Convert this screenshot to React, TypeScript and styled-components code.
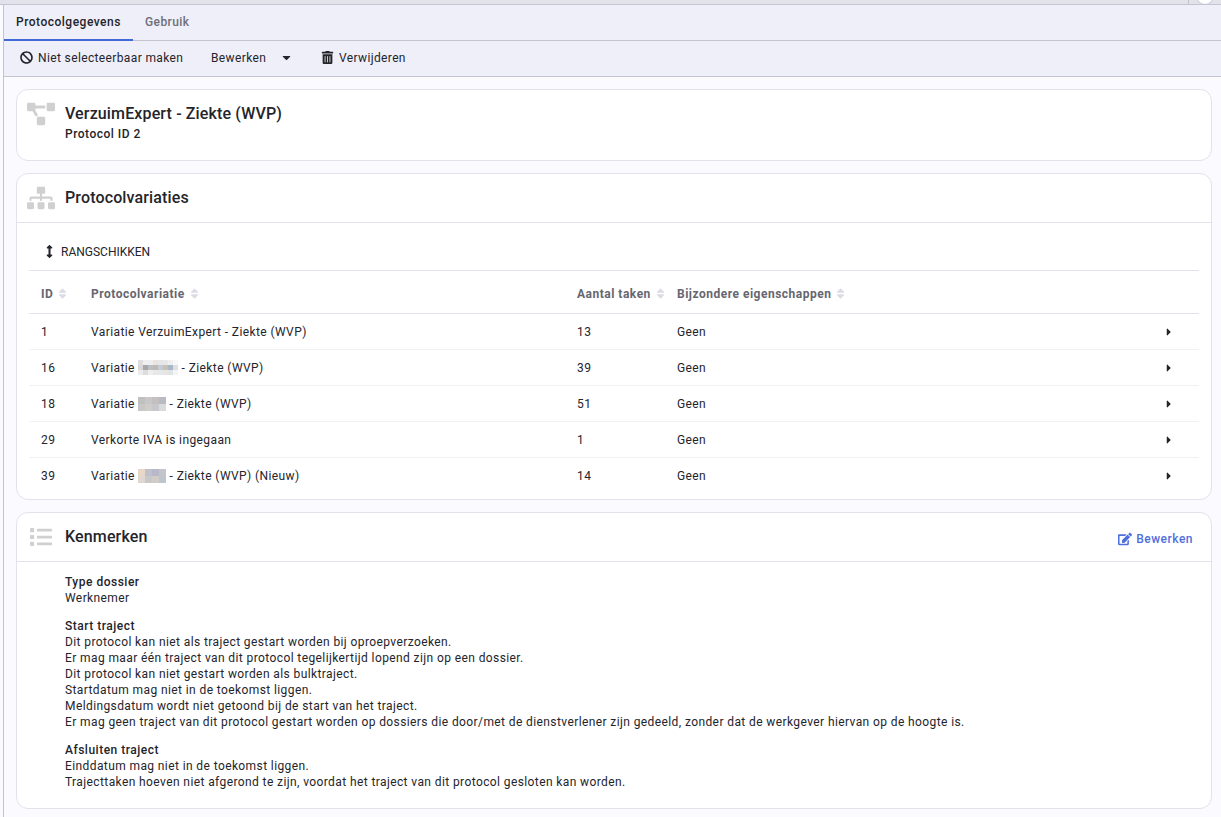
import React from 'react';
import styled, { createGlobalStyle } from 'styled-components';
import {
  FaArrowsAltV,
  FaBan,
  FaCaretDown,
  FaCaretRight,
  FaEdit,
  FaList,
  FaProjectDiagram,
  FaSitemap,
  FaSort,
  FaTrashAlt,
} from 'react-icons/fa';

const GlobalStyle = createGlobalStyle`
  html, body {
    margin: 0;
    padding: 0;
    height: 100%;
    overflow: hidden;
    background: #fbfaff;
    color: #24242b;
    font-family: Roboto, "Liberation Sans", sans-serif;
    font-size: 12px;
    letter-spacing: 0.4px;
  }
`;

const TopStrip = styled.div`
  height: 4px;
  background: #e2e2ea;
  border-bottom: 1px solid #c4c4d0;
  display: flex;
  justify-content: flex-end;
  overflow: hidden;
`;

const StripHandle = styled.div`
  width: 32px;
  border-left: 1px solid #c4c4d0;
  display: flex;
  justify-content: center;
`;

const StripKnob = styled.div`
  width: 16px;
  height: 16px;
  margin-top: -13px;
  border-radius: 50%;
  background: #fff;
  border: 1px solid #c4c4d0;
`;

const Shell = styled.div`
  height: 812px;
  margin-left: 3px;
  border-left: 1px solid #c4c4d0;
`;

const Tabs = styled.nav`
  height: 35px;
  display: flex;
  background: #efeff9;
  border-bottom: 1px solid #c4c4d0;
`;

const Tab = styled.div<{ $active?: boolean }>`
  width: ${p => (p.$active ? '129px' : 'auto')};
  padding-left: 12px;
  box-sizing: border-box;
  height: 36px;
  display: flex;
  align-items: center;
  font-weight: 500;
  letter-spacing: ${p => (p.$active ? '0.5px' : '0.4px')};
  color: ${p => (p.$active ? '#24242b' : '#6e6e78')};
  border-bottom: 2px solid ${p => (p.$active ? '#4169d8' : 'transparent')};
`;

const Toolbar = styled.div`
  height: 33px;
  display: flex;
  align-items: center;
  padding: 0 0 2px 16px;
  background: #efeff9;
  border-bottom: 1px solid #c4c4d0;
  letter-spacing: 0.37px;
`;

const ToolButton = styled.div<{ $width: number }>`
  width: ${p => p.$width}px;
  display: flex;
  align-items: center;
  gap: 5px;
  svg {
    font-size: 13px;
    color: #24242b;
  }
`;

const Caret = styled(FaCaretDown)`
  margin-left: 9px;
  font-size: 12px;
`;

const Content = styled.main`
  padding: 12px 9px 0 12px;
  display: flex;
  flex-direction: column;
  gap: 12px;
`;

const Card = styled.section<{ $height: number }>`
  height: ${p => p.$height}px;
  box-sizing: border-box;
  background: #fff;
  border: 1px solid #e2e2ec;
  border-radius: 12px;
  overflow: hidden;
`;

const IdentityRow = styled.div`
  display: flex;
  padding: 14px 0 0 10px;
`;

const IconSlot = styled.div`
  width: 38px;
  flex: none;
  color: #d0d0d0;
  font-size: 28px;
  line-height: 0;
`;

const DiagramSlot = styled(IconSlot)`
  margin-top: -4px;
`;

const ListSlot = styled(IconSlot)`
  padding-left: 3px;
  box-sizing: border-box;
  font-size: 22px;
`;

const CardTitle = styled.h2`
  margin: 0;
  font-size: 16px;
  line-height: 20px;
  font-weight: 500;
  letter-spacing: 0.14px;
  color: #24242b;
`;

const Subtitle = styled.div`
  font-weight: 500;
  line-height: 20px;
  letter-spacing: 0.5px;
`;

const CardHeader = styled.header`
  height: 48px;
  display: flex;
  align-items: center;
  padding: 0 18px 0 10px;
  border-bottom: 1px solid #e2e2ec;
`;

const HeaderAction = styled.div`
  margin-left: auto;
  margin-top: 4px;
  display: flex;
  align-items: center;
  gap: 4px;
  font-weight: 500;
  letter-spacing: 0.5px;
  color: #4f6fdc;
  svg {
    font-size: 14px;
  }
`;

const SortBar = styled.div`
  height: 48px;
  margin: 0 12px;
  display: flex;
  align-items: center;
  padding: 10px 0 0 14px;
  box-sizing: border-box;
  gap: 5px;
  border-bottom: 1px solid #e2e2ec;
  letter-spacing: 0;
  svg {
    font-size: 13px;
  }
`;

const Table = styled.div`
  margin: 0 12px;
`;

const Row = styled.div<{ $head?: boolean }>`
  display: grid;
  grid-template-columns: 50px 486px 100px 1fr 36px;
  height: ${p => (p.$head ? '43px' : '36px')};
  box-sizing: border-box;
  align-items: center;
  padding-left: 12px;
  padding-top: ${p => (p.$head ? '3px' : '0')};
  border-bottom: 1px solid ${p => (p.$head ? '#e2e2ec' : '#f0f0f5')};
  font-weight: ${p => (p.$head ? 700 : 400)};
  letter-spacing: ${p => (p.$head ? '0.5px' : '0.4px')};
  color: ${p => (p.$head ? '#66666f' : '#24242b')};
  &:last-child {
    border-bottom: none;
  }
`;

const HeadCell = styled.div`
  display: flex;
  align-items: center;
  gap: 2px;
  white-space: nowrap;
`;

const SortIcon = styled(FaSort)`
  color: #dcdce6;
  font-size: 13px;
  margin-left: 1px;
`;

const Arrow = styled(FaCaretRight)`
  font-size: 12px;
  color: #24242b;
`;

const Redacted = styled.span<{ $grid: string[][]; $size: number }>`
  display: inline-block;
  vertical-align: -3px;
  width: ${p => p.$grid[0].length * p.$size}px;
  height: ${p => p.$grid.length * p.$size}px;
  background-repeat: no-repeat;
  background-image: ${p =>
    p.$grid
      .map(
        line =>
          `linear-gradient(90deg, ${line
            .map((c, i) => `${c} ${i * p.$size}px ${(i + 1) * p.$size}px`)
            .join(', ')})`,
      )
      .join(', ')};
  background-size: ${p => `100% ${p.$size}px`};
  background-position: ${p => p.$grid.map((_, i) => `0 ${i * p.$size}px`).join(', ')};
`;

const Details = styled.div`
  padding: 12px 0 0 48px;
  line-height: 16px;
`;

const DetailGroup = styled.div`
  margin-bottom: 12px;
`;

const DetailLabel = styled.div`
  font-weight: 500;
  letter-spacing: 0.5px;
`;

const blurA = [
  ['#dedede', '#f0f0f0', '#eeeeee', '#e8e4e0', '#e6e6e8', '#e8e8ea', '#eef0f0', '#f8f8f8'],
  ['#d8d8d8', '#a8a8a8', '#b8c0c8', '#c4b8ac', '#c4ccd8', '#c8c0b0', '#a8b8c8', '#e0e0e0'],
  ['#ececec', '#dcdcdc', '#eeeeee', '#e8e8e8', '#e4e8e8', '#e8e4e0', '#e0e4e8', '#f4f4f4'],
];
const blurB = [
  ['#c0c0c0', '#c8c8c8', '#c4c0c0', '#b8bcc0'],
  ['#c8c8c8', '#d0ccc8', '#c8c8cc', '#d8dcdc'],
];
const blurC = [
  ['#e8d8c8', '#c0c0cc', '#b8b8c8', '#c4c4cc'],
  ['#e0d8d0', '#c8c8c8', '#d0ccc8', '#c0c4cc'],
];

const rows: { id: string; name: React.ReactNode; tasks: string }[] = [
  { id: '1', name: 'Variatie VerzuimExpert - Ziekte (WVP)', tasks: '13' },
  { id: '16', name: <>Variatie <Redacted $grid={blurA} $size={5} /> - Ziekte (WVP)</>, tasks: '39' },
  { id: '18', name: <>Variatie <Redacted $grid={blurB} $size={7} /> - Ziekte (WVP)</>, tasks: '51' },
  { id: '29', name: 'Verkorte IVA is ingegaan', tasks: '1' },
  { id: '39', name: <>Variatie <Redacted $grid={blurC} $size={7} /> - Ziekte (WVP) (Nieuw)</>, tasks: '14' },
];

const details = [
  { label: 'Type dossier', lines: ['Werknemer'] },
  {
    label: 'Start traject',
    lines: [
      'Dit protocol kan niet als traject gestart worden bij oproepverzoeken.',
      'Er mag maar één traject van dit protocol tegelijkertijd lopend zijn op een dossier.',
      'Dit protocol kan niet gestart worden als bulktraject.',
      'Startdatum mag niet in de toekomst liggen.',
      'Meldingsdatum wordt niet getoond bij de start van het traject.',
      'Er mag geen traject van dit protocol gestart worden op dossiers die door/met de dienstverlener zijn gedeeld, zonder dat de werkgever hiervan op de hoogte is.',
    ],
  },
  {
    label: 'Afsluiten traject',
    lines: [
      'Einddatum mag niet in de toekomst liggen.',
      'Trajecttaken hoeven niet afgerond te zijn, voordat het traject van dit protocol gesloten kan worden.',
    ],
  },
];

const App: React.FC = () => {
  return (
    <>
      <GlobalStyle />
      <TopStrip>
        <StripHandle>
          <StripKnob />
        </StripHandle>
      </TopStrip>
      <Shell>
        <Tabs>
          <Tab $active>Protocolgegevens</Tab>
          <Tab>Gebruik</Tab>
        </Tabs>
        <Toolbar>
          <ToolButton $width={191}><FaBan /> Niet selecteerbaar maken</ToolButton>
          <ToolButton $width={110}>Bewerken <Caret /></ToolButton>
          <ToolButton $width={100}><FaTrashAlt /> Verwijderen</ToolButton>
        </Toolbar>
        <Content>
          <Card $height={72}>
            <IdentityRow>
              <DiagramSlot><FaProjectDiagram /></DiagramSlot>
              <div>
                <CardTitle>VerzuimExpert - Ziekte (WVP)</CardTitle>
                <Subtitle>Protocol ID 2</Subtitle>
              </div>
            </IdentityRow>
          </Card>
          <Card $height={327}>
            <CardHeader>
              <IconSlot><FaSitemap /></IconSlot>
              <CardTitle>Protocolvariaties</CardTitle>
            </CardHeader>
            <SortBar>
              <FaArrowsAltV />
              RANGSCHIKKEN
            </SortBar>
            <Table>
              <Row $head>
                <HeadCell>ID <SortIcon /></HeadCell>
                <HeadCell>Protocolvariatie <SortIcon /></HeadCell>
                <HeadCell>Aantal taken <SortIcon /></HeadCell>
                <HeadCell>Bijzondere eigenschappen <SortIcon /></HeadCell>
                <span />
              </Row>
              {rows.map(r => (
                <Row key={r.id}>
                  <span>{r.id}</span>
                  <span>{r.name}</span>
                  <span>{r.tasks}</span>
                  <span>Geen</span>
                  <Arrow />
                </Row>
              ))}
            </Table>
          </Card>
          <Card $height={297}>
            <CardHeader>
              <ListSlot><FaList /></ListSlot>
              <CardTitle>Kenmerken</CardTitle>
              <HeaderAction><FaEdit /> Bewerken</HeaderAction>
            </CardHeader>
            <Details>
              {details.map(d => (
                <DetailGroup key={d.label}>
                  <DetailLabel>{d.label}</DetailLabel>
                  {d.lines.map(l => <div key={l}>{l}</div>)}
                </DetailGroup>
              ))}
            </Details>
          </Card>
        </Content>
      </Shell>
    </>
  );
};

export default App;
